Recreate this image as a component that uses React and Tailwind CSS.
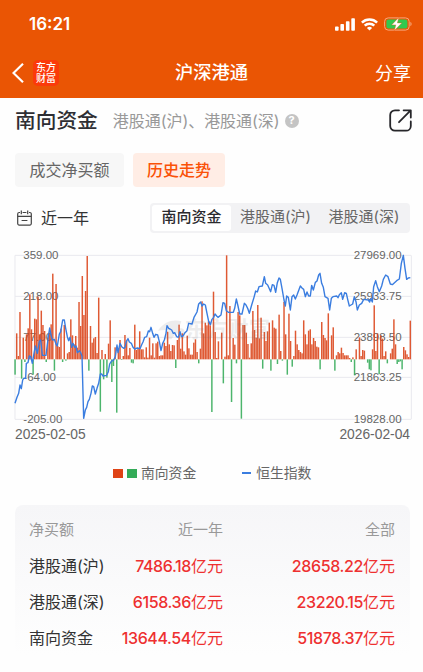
import React from "react";

// daily net inflow, 3 units per pixel
const FLOWS = [
  -46, 78, 10, 142, -58, 65, -8, 75, 93, 195, 90, -46, 122, 120, 188, 75, 146, 103, 85, -8,
  65, 80, 105, 257, -34, 226, 40, 37, 92, -8, 103, -4, 18, 22, 120, 72, 45, 70, 35, 172,
  100, 250, 133, 205, 310, -34, 100, 50, 63, 67, 19, 185, -157, 28, -60, 16, -55, 47, 117, -68,
  -20, 36, -160, 30, 58, -2, 10, 73, 56, 12, 34, -10, -12, 104, 28, 33, 84, 30, 30, 6,
  36, 5, 65, 12, 48, 5, 48, 53, 10, 12, 12, 50, 40, 83, 45, 25, 43, 42, -26, 58,
  104, 32, 78, 24, 14, 71, 33, 14, 14, 50, 60, 22, -12, 32, 174, 78, 110, 102, 115, 102,
  -158, 203, 82, 4, 54, 0, 80, -72, 8, 312, 12, 160, -128, 64, 44, -12, 142, 132, -178, 103,
  103, 80, 46, 5, 48, 145, 88, 65, 163, 63, 125, -28, 82, 55, 84, 110, -34, 117, 95, 92,
  -14, 134, 25, -4, 172, 75, -46, 137, 55, -22, 10, 86, 45, 28, 22, 18, 117, 75, 45, 86,
  90, 45, 64, 55, 38, 36, -30, 112, 73, 64, 57, 138, 0, 72, 96, -34, 12, 22, 18, 35,
  19, 12, 12, 12, 4, -8, 6, -48, 30, 0, 66, 10, 28, 26, 0, -10, -30, -33, 30, 162,
  25, 78, -44, 72, 62, 10, 24, -12, 0, 18, 32, 120, 45, -14, -8, -6, -30, 37, 27, 15,
  7, 116,
];

const INDEX_LINE =
  "45,490 51,472 56,460 60,435 64,446 68,420 71,415 77,414 79,370 84,368 88,348 92,350 97,370 102,340 106,318 112,340 118,305 122,300 127,346 138,346 145,290 149,264 154,290 158,300 163,298 168,312 172,318 178,282 182,275 188,240 193,240 197,265 202,290 206,302 210,292 215,322 219,310 224,322 228,318 232,338 238,332 242,338 246,348 251,535 256,510 260,502 264,485 268,478 273,460 277,438 281,440 286,462 291,445 296,430 301,402 305,402 309,408 320,406 325,395 329,372 334,364 341,360 346,350 351,315 354,338 360,310 365,320 371,325 375,322 379,304 384,296 388,306 394,310 399,322 404,327 412,324 420,326 426,312 429,306 434,292 440,290 445,273 449,275 453,262 458,280 462,292 467,283 473,285 478,305 483,332 488,310 493,300 498,280 501,257 506,265 510,267 515,270 520,280 524,278 530,290 535,292 540,275 544,290 549,288 555,278 561,272 566,250 576,252 582,232 591,216 596,192 602,186 606,198 611,192 616,195 621,220 626,244 631,254 636,238 641,232 645,222 650,228 654,232 663,225 669,188 674,190 679,212 685,217 700,217 704,205 709,177 714,198 719,222 726,222 733,190 738,195 743,205 748,220 755,195 762,172 767,153 772,156 777,140 787,138 793,110 797,130 803,135 812,155 817,134 822,136 827,157 832,128 837,114 841,118 846,145 852,180 856,198 860,168 865,172 871,210 876,170 881,165 886,177 891,165 901,138 906,144 911,148 916,170 921,156 926,168 931,168 935,136 940,150 946,127 951,123 956,105 960,100 965,130 970,142 975,170 984,175 989,210 994,175 999,170 1010,168 1014,173 1018,164 1024,158 1028,178 1034,158 1039,160 1043,178 1048,198 1058,192 1063,170 1068,185 1072,210 1078,195 1085,190 1091,178 1105,180 1109,186 1112,176 1117,186 1121,140 1127,122 1132,140 1138,155 1145,138 1150,118 1157,105 1164,110 1171,132 1177,134 1190,122 1198,117 1204,70 1210,46 1215,85 1220,118 1225,114 1231,113";

const TICKS = [
  { y: 46, left: "359.00", right: "27969.00" },
  { y: 169, left: "218.00", right: "25933.75" },
  { y: 292, left: "77.00", right: "23898.50" },
  { y: 412, left: "-64.00", right: "21863.25" },
  { y: 538, left: "-205.00", right: "19828.00" },
];

const ROWS = [
  { name: "港股通(沪)", year: "7486.18", all: "28658.22" },
  { name: "港股通(深)", year: "6158.36", all: "23220.15" },
  { name: "南向资金", year: "13644.54", all: "51878.37" },
];

function StatusBar() {
  return (
    <div className="flex h-[48px] items-center justify-between pl-[29px] pr-[11px]">
      <span className="text-[17px] leading-none font-semibold">16:21</span>
      <div className="flex items-center gap-[6px]">
        <svg width="20" height="13" viewBox="0 0 20 13" fill="currentColor">
          <rect x="0" y="8.5" width="3.6" height="4.2" rx="0.8" />
          <rect x="5.4" y="6" width="3.6" height="6.7" rx="0.8" />
          <rect x="10.9" y="3.2" width="3.6" height="9.5" rx="0.8" />
          <rect x="16.3" y="0.3" width="3.6" height="12.4" rx="0.8" />
        </svg>
        <svg width="17" height="13" viewBox="0 0 17 13" fill="none" stroke="currentColor" strokeWidth="2.5">
          <path d="M0.9 4.6a10.8 10.8 0 0 1 15.2 0" />
          <path d="M3.7 7.7a6.8 6.8 0 0 1 9.6 0" />
          <path d="M8.5 12.6 5.9 10a3.7 3.7 0 0 1 5.2 0Z" fill="currentColor" stroke="none" />
        </svg>
        <svg width="28" height="14" viewBox="0 0 28 14">
          <rect x="0.6" y="0.9" width="24.6" height="12.2" rx="3.6" fill="none" stroke="#f6a77c" />
          <path d="M26.4 4.8c1.6.7 1.6 3.7 0 4.4Z" fill="#f6a77c" />
          <rect x="2.4" y="2.6" width="21" height="8.8" rx="2" fill="#30c94f" />
          <path d="M14.8 0.4 7.6 7.9h4.2L10.4 13.6l7.4-7.7h-4.4Z" fill="#fff" stroke="#ea5504" strokeWidth="0.4" />
        </svg>
      </div>
    </div>
  );
}

function Header() {
  return (
    <header className="h-[98px] bg-[#ea5504] text-white">
      <StatusBar />
      <div className="grid h-[50px] grid-cols-3 items-center pr-[12px] pl-[12px]">
        <div className="flex items-center gap-[9px]">
          <svg width="12" height="20" viewBox="0 0 12 20" fill="none" stroke="currentColor" strokeWidth="2.2">
            <path d="M11 0.8 1.5 10 11 19.2" />
          </svg>
          <div className="flex h-[26px] w-[26px] flex-col items-center justify-center rounded-[5px] bg-[#fb3a0a] text-[10px] leading-[11px] font-medium">
            <span>东方</span>
            <span>财富</span>
          </div>
        </div>
        <h1 className="text-center text-[18.3px] font-medium">沪深港通</h1>
        <span className="text-right text-[18px]">分享</span>
      </div>
    </header>
  );
}

function FlowChart() {
  return (
    <svg className="block" width="423" height="186" viewBox="0 0 1269 558">
      <g stroke="#e9e9ee" strokeWidth="3">
        {TICKS.map((t) => (
          <line key={t.y} x1="45" x2="1233" y1={t.y} y2={t.y} />
        ))}
        <line x1="45" x2="45" y1="46" y2="538" />
        <line x1="1234" x2="1234" y1="46" y2="538" />
      </g>
      <g fill="#666" fontSize="34.5" fontFamily="Liberation Sans, sans-serif">
        {TICKS.map((t) => (
          <React.Fragment key={t.y}>
            <text x="70" y={t.y + 11}>{t.left}</text>
            <text x="1205" y={t.y + 11} textAnchor="end">{t.right}</text>
          </React.Fragment>
        ))}
      </g>
      <g opacity="0.88">
        {FLOWS.map((v, i) => (
          <rect
            key={i}
            x={43 + i * 4.92}
            y={v > 0 ? 358 - v : 358}
            width="4.4"
            height={Math.abs(v)}
            fill={v > 0 ? "#db4318" : "#34ab58"}
          />
        ))}
      </g>
      <g fill="#777" opacity="0.13">
        <path d="M474 272c20-30 48-34 70-28l-8 22c14-6 24 6 16 30h-14c4-14-4-20-14-12l-10 14h-22l16-26c-12-4-24-2-34 0Z" />
        <text x="554" y="292" fontSize="64" fontWeight="700">东方财富</text>
      </g>
      <polyline points={INDEX_LINE} fill="none" stroke="#3a7de0" strokeWidth="4.2" strokeLinejoin="round" />
    </svg>
  );
}

function Summary() {
  return (
    <section className="mr-[13px] ml-[15px] mt-[21px] h-[151px] rounded-[8px] bg-linear-to-b from-[#f6f6f8] to-[#fefefe] pt-[7px] pr-[15px] pl-[14px]">
      <div className="grid h-[36px] grid-cols-[90px_104px_1fr] items-center text-[15px] text-[#999]">
        <span>净买额</span>
        <span className="text-right">近一年</span>
        <span className="text-right">全部</span>
      </div>
      {ROWS.map((row) => (
        <div key={row.name} className="grid h-[36px] grid-cols-[90px_104px_1fr] items-center text-[16px] text-[#333]">
          <span>{row.name}</span>
          <Amount value={row.year} />
          <Amount value={row.all} />
        </div>
      ))}
    </section>
  );
}

function Amount({ value }) {
  return (
    <span className="text-right whitespace-nowrap text-[#ee3030]">
      <span className="text-[16px] font-medium tracking-[-0.38px]">{value}</span>亿元
    </span>
  );
}

export default function App() {
  return (
    <div className="h-[672px] w-[423px] overflow-hidden bg-[#fefefe] font-['Inter','Noto_Sans_CJK_SC',sans-serif]">
      <Header />

      <div className="flex h-[45px] items-center pr-[11px] pl-[15px]">
        <h2 className="text-[20.7px] font-medium text-[#2e2e33]">南向资金</h2>
        <span className="ml-[15px] text-[16px] tracking-[-0.04px] whitespace-nowrap text-[#999]">港股通(沪)、港股通(深)</span>
        <span className="ml-[5px] flex h-[14px] w-[14px] items-center justify-center rounded-full bg-[#c4c4c4] text-[11px] leading-none font-bold text-white">
          ?
        </span>
        <svg className="ml-auto" width="23" height="23" viewBox="0 0 23 23" fill="none" stroke="#26262a" strokeWidth="1.8" strokeLinecap="round" strokeLinejoin="round">
          <path d="M10 1.3H6A4.8 4.8 0 0 0 1.2 6.1v10.8A4.8 4.8 0 0 0 6 21.7h11a4.8 4.8 0 0 0 4.8-4.8V12.5" />
          <path d="M14.6 1.3h7.2v7.2M21.4 1.7 10 13.2" />
        </svg>
      </div>

      <div className="mt-[10px] flex gap-[9px] px-[15px]">
        <button className="h-[34px] w-[109px] rounded-[4px] bg-[#f7f7f7] text-[16px] text-[#666]">成交净买额</button>
        <button className="h-[34px] w-[92px] rounded-[4px] bg-[#ffede5] text-[16px] font-medium text-[#fa5208]">
          历史走势
        </button>
      </div>

      <div className="mt-[15px] flex h-[31px] items-center justify-between pr-[13px] pl-[17px]">
        <div className="flex items-center gap-[9px] text-[16px] text-[#333]">
          <svg width="15" height="16" viewBox="0 0 15 16" fill="none" stroke="#444" strokeWidth="1.2">
            <path d="M3 2.5H2.2A1.5 1.5 0 0 0 .7 4v9.6a1.5 1.5 0 0 0 1.5 1.5h10.6a1.5 1.5 0 0 0 1.5-1.5V4a1.5 1.5 0 0 0-1.5-1.5H12M5.6 2.5h3.8" />
            <path d="M0.7 6.3h13.6M4.3 0.5v3.8M10.7 0.5v3.8M4.6 10.5h5.8" />
          </svg>
          近一年
        </div>
        <div className="flex h-[30px] w-[260px] rounded-[4px] bg-[#f2f2f4] p-[2px] text-[15px] text-[#666]">
          <button className="w-[79px] rounded-[3px] bg-white font-medium text-[#2a2a2e]">南向资金</button>
          <button className="w-[89px]">港股通(沪)</button>
          <button className="w-[88px]">港股通(深)</button>
        </div>
      </div>

      <div className="mt-[7px]">
        <FlowChart />
        <div className="flex h-[22px] items-start justify-between pr-[13px] pl-[15px] font-['Liberation_Sans',sans-serif] text-[13.8px] leading-[18px] text-[#666]">
          <span>2025-02-05</span>
          <span>2026-02-04</span>
        </div>
      </div>

      <div className="mt-[14px] flex h-[22px] items-center pl-[113px] text-[13.8px] text-[#666]">
        <i className="h-[9px] w-[10px] bg-[#df4316]" />
        <i className="ml-[4px] h-[9px] w-[10px] bg-[#34ab58]" />
        <span className="ml-[4px]">南向资金</span>
        <i className="ml-[46px] h-[2px] w-[9px] bg-[#3a7de0]" />
        <span className="ml-[5px]">恒生指数</span>
      </div>

      <Summary />
    </div>
  );
}
